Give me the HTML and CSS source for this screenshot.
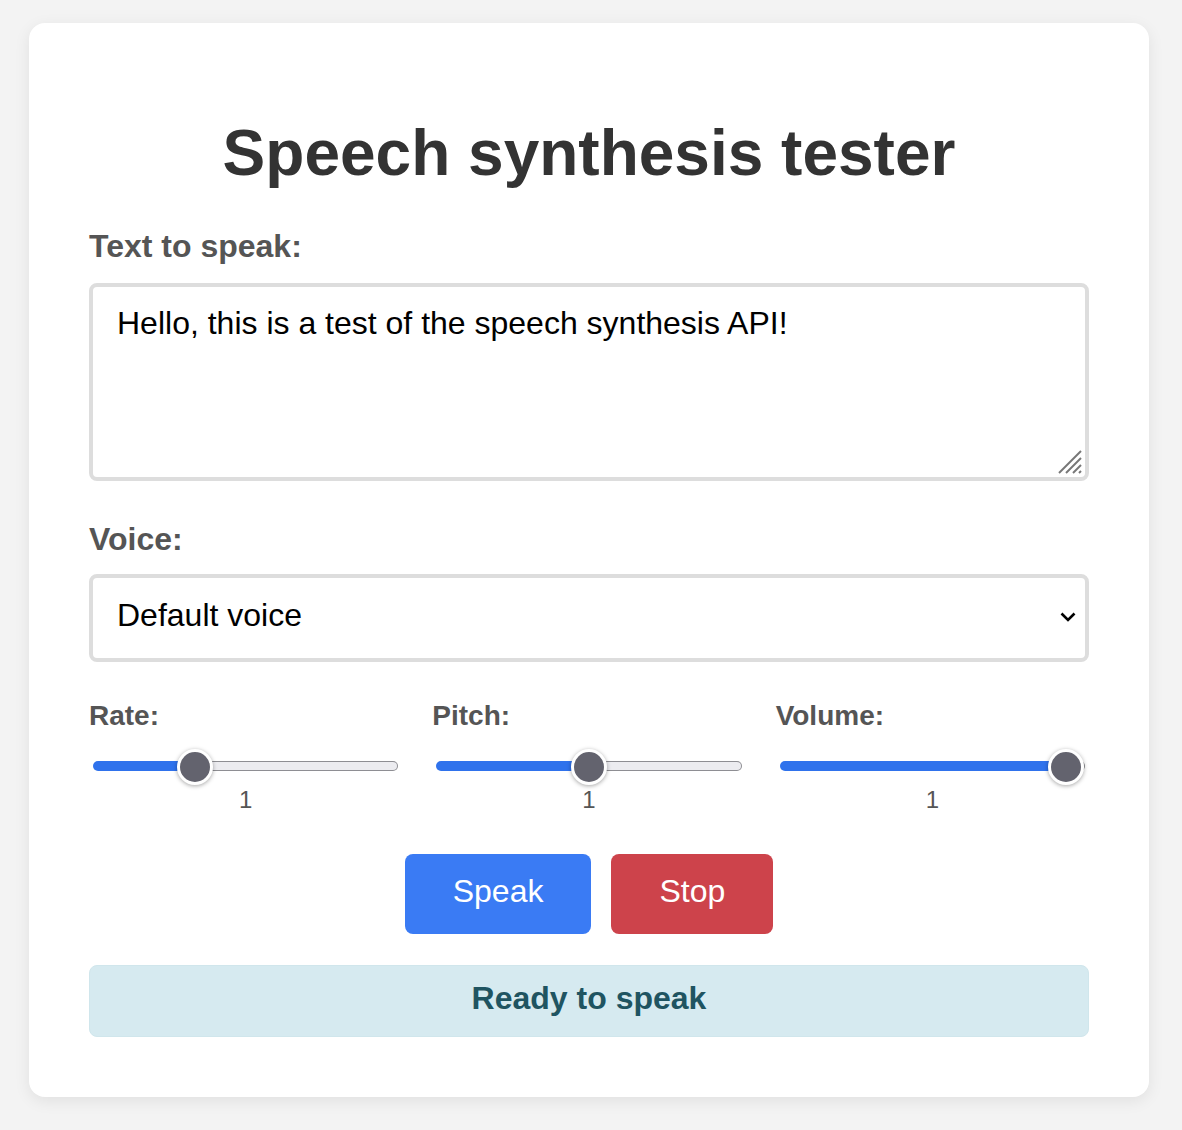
FILE: index.html
```html
<!DOCTYPE html>
<html lang="en">
<head>
  <meta charset="UTF-8">
  <meta name="viewport" content="width=device-width, initial-scale=1.0">
  <title>Speech synthesis tester</title>
  <link rel="stylesheet" href="styles.css">
</head>
<body>
  <div class="card">
    <h1>Speech synthesis tester</h1>

    <div class="field">
      <label for="text">Text to speak:</label>
      <div class="textarea-wrap">
        <textarea id="text">Hello, this is a test of the speech synthesis API!</textarea>
        <svg class="grip" width="26" height="26" viewBox="0 0 26 26">
          <line x1="24" y1="2" x2="2" y2="24" />
          <line x1="24" y1="9" x2="9" y2="24" />
          <line x1="24" y1="16" x2="16" y2="24" />
          <line x1="24" y1="22" x2="22" y2="24" />
        </svg>
      </div>
    </div>

    <div class="field">
      <label for="voice">Voice:</label>
      <div class="select-wrap">
        <select id="voice">
          <option value="">Default voice</option>
        </select>
        <svg class="chevron" width="16" height="10" viewBox="0 0 16 10">
          <polyline points="1.5,1.5 8,8 14.5,1.5" />
        </svg>
      </div>
    </div>

    <div class="sliders">
      <div class="slider">
        <label for="rate">Rate:</label>
        <input type="range" id="rate" min="0.1" max="3" step="0.1" value="1">
        <span class="value" id="rateValue">1</span>
      </div>
      <div class="slider">
        <label for="pitch">Pitch:</label>
        <input type="range" id="pitch" min="0" max="2" step="0.1" value="1">
        <span class="value" id="pitchValue">1</span>
      </div>
      <div class="slider">
        <label for="volume">Volume:</label>
        <input type="range" id="volume" min="0" max="1" step="0.1" value="1">
        <span class="value" id="volumeValue">1</span>
      </div>
    </div>

    <div class="buttons">
      <button id="speak" class="speak">Speak</button>
      <button id="stop" class="stop">Stop</button>
    </div>

    <div class="status" id="status">Ready to speak</div>
  </div>

  <script>
    const ranges = document.querySelectorAll(".slider input");
    const thumbSize = 36;

    function updateRange(range) {
      const min = parseFloat(range.min);
      const max = parseFloat(range.max);
      const ratio = (parseFloat(range.value) - min) / (max - min);
      const fill = thumbSize / 2 + (range.offsetWidth - thumbSize) * ratio;

      range.style.setProperty("--fill", fill + "px");
      document.getElementById(range.id + "Value").textContent = range.value;
    }

    ranges.forEach(range => {
      updateRange(range);
      range.addEventListener("input", () => updateRange(range));
    });
  </script>
</body>
</html>
```

FILE: styles.css
```css
body {
  margin: 0;
  padding: 23px 0 33px 29px;
  background-color: #f3f3f3;
  font-family: "Liberation Sans", Arial, sans-serif;
}

.card {
  width: 1120px;
  box-sizing: border-box;
  padding: 60px;
  background-color: #fff;
  border-radius: 16px;
  box-shadow: 0 4px 16px rgba(0, 0, 0, 0.08);
}

h1 {
  font-size: 64px;
  text-align: center;
  color: #333;
  margin: 33px 0 38px;
}

.field {
  margin-bottom: 40px;
}

.field label,
.slider label {
  display: block;
  font-size: 32px;
  font-weight: bold;
  color: #555;
}

.field label {
  margin-bottom: 18px;
}

.field + .field label {
  margin-bottom: 16px;
}

.textarea-wrap,
.select-wrap {
  position: relative;
}

textarea,
select {
  display: block;
  width: 100%;
  box-sizing: border-box;
  border: 4px solid #ddd;
  border-radius: 8px;
  font-family: inherit;
  font-size: 32px;
  color: #000;
  background-color: #fff;
}

textarea {
  height: 198px;
  padding: 18px 24px 20px;
  resize: none;
}

.grip {
  position: absolute;
  right: 6px;
  bottom: 6px;
}

.grip line {
  stroke: #777;
  stroke-width: 2;
}

select {
  -webkit-appearance: none;
  appearance: none;
  height: 88px;
  padding: 0 24px 6px;
}

.chevron {
  position: absolute;
  right: 13px;
  top: 38px;
  pointer-events: none;
}

.chevron polyline {
  fill: none;
  stroke: #000;
  stroke-width: 2.6;
}

.sliders {
  display: flex;
  gap: 30px;
  margin-top: -2px;
}

.slider {
  flex: 1;
  display: flex;
  flex-direction: column;
}

.slider label {
  font-size: 28px;
}

.slider input {
  -webkit-appearance: none;
  appearance: none;
  width: calc(100% - 8px);
  height: 40px;
  margin: 14px 4px 0;
  background: transparent;
}

.slider input::-webkit-slider-runnable-track {
  height: 10px;
  border: 1px solid transparent;
  border-radius: 6px;
  background:
    linear-gradient(to right, #2f72ec var(--fill), transparent var(--fill)) border-box,
    linear-gradient(#ececf0, #ececf0) padding-box,
    linear-gradient(#8e8e93, #8e8e93) border-box;
}

.slider input::-webkit-slider-thumb {
  -webkit-appearance: none;
  width: 36px;
  height: 36px;
  margin-top: -13px;
  box-sizing: border-box;
  border-radius: 50%;
  border: 3px solid #fff;
  background-color: #63636e;
  box-shadow: 0 1px 4px rgba(0, 0, 0, 0.35);
}

.slider .value {
  text-align: center;
  font-size: 24px;
  color: #555;
}

.buttons {
  display: flex;
  justify-content: center;
  gap: 20px;
  margin-top: 40px;
}

.buttons button {
  padding: 19px 48px 25px;
  font-family: inherit;
  font-size: 32px;
  line-height: 36px;
  color: #fff;
  border: none;
  border-radius: 8px;
  cursor: pointer;
}

.speak {
  background-color: #3a7bf4;
}

.stop {
  background-color: #cd434b;
}

.status {
  margin-top: 31px;
  padding: 14px 17px 19px;
  text-align: center;
  font-size: 32px;
  font-weight: bold;
  color: #1f5461;
  background-color: #d6eaf0;
  border: 1px solid #d0e6ec;
  border-radius: 8px;
}
```
